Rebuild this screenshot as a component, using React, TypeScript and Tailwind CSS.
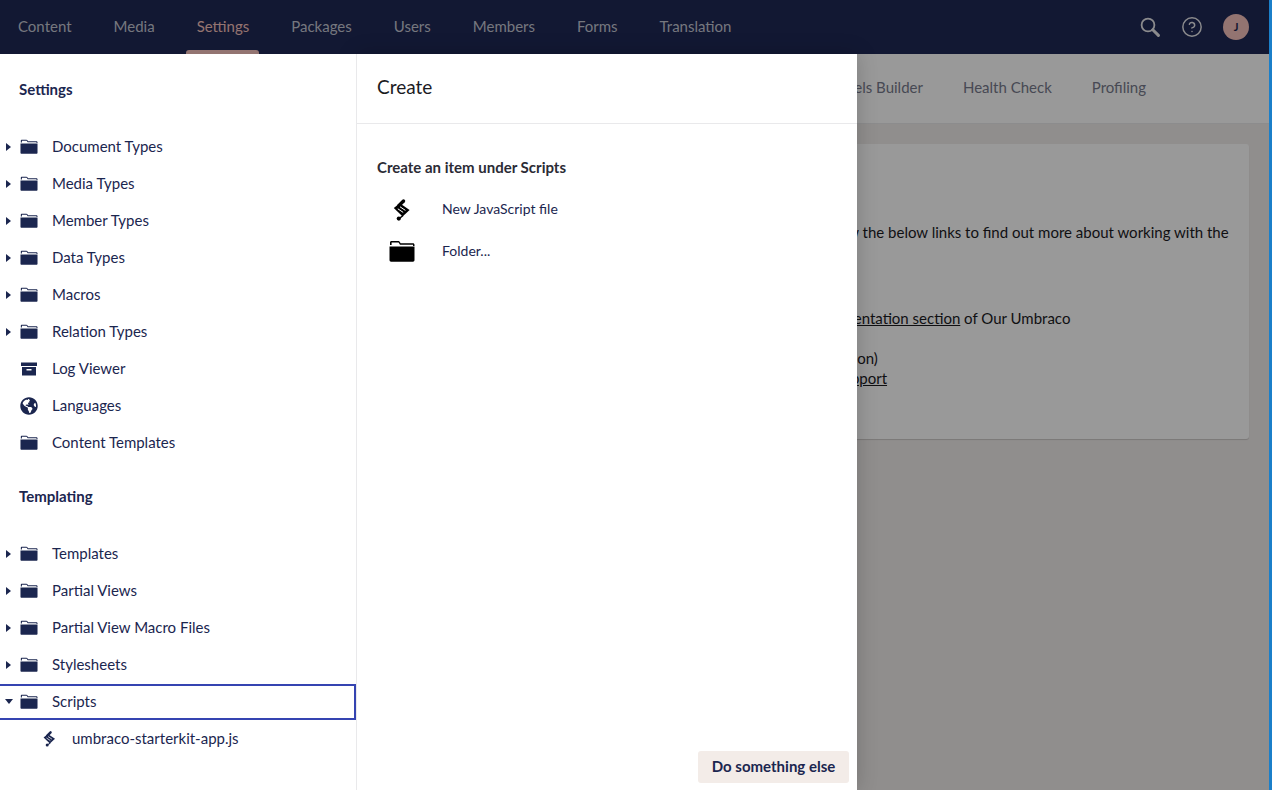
import { CircleHelp } from "lucide-react";
import { FaGlobeAmericas } from "react-icons/fa";

function FolderIcon({ className }: { className?: string }) {
  return (
    <svg viewBox="0 0 26 22" className={className} fill="currentColor">
      <path d="M1 5V2.5C1 1.6 1.6 1 2.5 1H9C10 1 10.6 1.4 11 2.2L11.6 3.2H24C24.8 3.2 25.5 3.9 25.5 4.7V6H24V4.8H11L9.6 2.6H2.6V5Z" />
      <path d="M0.5 6.5H25.5V20C25.5 21 24.8 21.7 24 21.7H2C1.2 21.7 0.5 21 0.5 20Z" />
    </svg>
  );
}

function ArchiveIcon({ className }: { className?: string }) {
  return (
    <svg viewBox="0 0 16 14" className={className} fill="currentColor">
      <rect x="0" y="0.5" width="16" height="3.5" />
      <path d="M1 5H15V13.5H1ZM5.5 7V8.5H10.5V7Z" fillRule="evenodd" />
    </svg>
  );
}

function ScriptIcon({ className }: { className?: string }) {
  return (
    <svg viewBox="0 0 18 23" className={className} fill="currentColor">
      <path d="M10.5 3L6 7.5" stroke="currentColor" strokeWidth="3.4" strokeLinecap="round" />
      <path d="M0.8 10L6.8 5.2L16.6 12L9.6 18.4Z" />
      <path d="M7 8.8L12.4 12.4M4.8 10.8L10.2 14.4" stroke="#fff" strokeWidth="1" />
      <path d="M10 17.5L7 20" stroke="currentColor" strokeWidth="1.6" />
      <circle cx="5.8" cy="20.6" r="2.1" />
    </svg>
  );
}

function SearchIcon({ className }: { className?: string }) {
  return (
    <svg viewBox="0 0 20 20" className={className} fill="none" stroke="currentColor">
      <circle cx="8" cy="8" r="6.4" strokeWidth="1.8" />
      <path d="M12.8 12.8L18.4 18.4" strokeWidth="3" strokeLinecap="round" />
    </svg>
  );
}

function TreeRow({
  label,
  icon = "folder",
  caret = true,
}: {
  label: string;
  icon?: "folder" | "archive" | "globe";
  caret?: boolean;
}) {
  return (
    <li className="flex h-[37px] items-center text-[15px] text-[#1b264f]">
      <span className="flex w-5 pl-[6px]">
        {caret && (
          <span className="h-0 w-0 border-y-[4px] border-l-[5px] border-y-transparent border-l-[#1b264f]" />
        )}
      </span>
      <span className="flex w-[18px] justify-center">
        {icon === "folder" && <FolderIcon className="h-[15px] w-[18px]" />}
        {icon === "archive" && <ArchiveIcon className="h-[14px] w-[16px]" />}
        {icon === "globe" && <FaGlobeAmericas className="h-[18px] w-[18px]" />}
      </span>
      <span className="ml-[14px]">{label}</span>
    </li>
  );
}

const navItems = ["Content", "Media", "Settings", "Packages", "Users", "Members", "Forms", "Translation"];
const tabs = ["Welcome", "Examine Management", "Published Status", "Models Builder", "Health Check", "Profiling"];

export default function App() {
  return (
    <div className="relative flex h-[790px] w-[1272px] overflow-hidden bg-white font-['Lato',sans-serif]">
      <div className="flex min-w-0 flex-1 flex-col bg-[#f1edec]">
        {/* ===== TOP BAR ===== */}
        <header className="flex h-[54px] shrink-0 items-center justify-between bg-[#1f2855] pl-[18px] pr-5">
          <nav className="flex h-full items-center gap-[42px]">
            {navItems.map((item) =>
              item === "Settings" ? (
                <a key={item} className="relative flex h-full items-center pb-[2px] text-[15px] text-[#f5c1bc]">
                  {item}
                  <span className="absolute -left-[11px] -right-[10px] bottom-0 h-1 rounded-t-[3px] bg-[#f5c1bc]" />
                </a>
              ) : (
                <a key={item} className="pb-[2px] text-[15px] text-[#c4c6d3]">
                  {item}
                </a>
              ),
            )}
          </nav>
          <div className="flex items-center gap-5 text-[#e8e8ec]">
            <SearchIcon className="mr-[1px] h-5 w-5" />
            <CircleHelp className="h-[22px] w-[22px]" strokeWidth={1.6} />
            <span className="flex h-[26px] w-[26px] items-center justify-center rounded-full bg-[#f5c1bc] text-[11px] font-bold text-[#1b264f]">
              J
            </span>
          </div>
        </header>

        {/* ===== DASHBOARD BEHIND THE DRAWER ===== */}
        <main className="ml-[357px] flex min-h-0 flex-1 flex-col">
          <div className="flex h-[70px] shrink-0 items-center gap-10 border-b border-[#e9e9eb] bg-white pb-[2px] pl-[30px] text-[15px] text-[#777a8c]">
            {tabs.map((tab) => (
              <span key={tab} className="whitespace-nowrap">
                {tab}
              </span>
            ))}
          </div>
          <div className="p-5">
            <section className="h-[295px] rounded-[3px] bg-white px-5 pt-[30px] text-[15px] leading-5 text-[#1b1b1f] shadow-[0_1px_1px_rgba(0,0,0,0.16)]">
              <h3 className="text-xl font-bold">Start here</h3>
              <p className="mt-[20px]">
                This section contains the building blocks for your Umbraco site. Follow the below links to find out more
                about working with the items in the Settings section
              </p>
              <h4 className="mt-5 font-bold">Find out more:</h4>
              <ul className="mt-[6px] list-disc pl-[25px]">
                <li>
                  Read more about working with the items in Settings <a className="underline">in the Documentation section</a> of Our Umbraco
                </li>
                <li>
                  Ask a question in the <a className="underline">Community Forum</a>
                </li>
                <li>
                  Watch our <a className="underline">tutorial videos</a> (some are free, some require a subscription)
                </li>
                <li>
                  Find out about our <a className="underline">productivity boosting tools and commercial support</a>
                </li>
                <li>
                  Find out about real-life <a className="underline">training and certification</a> opportunities
                </li>
              </ul>
            </section>
          </div>
        </main>
      </div>

      {/* Browser edge */}
      <div className="relative z-30 w-[3px] shrink-0 bg-[#1b7fc9]" />

      {/* ===== DIM OVERLAY ===== */}
      <div className="absolute inset-0 z-10 bg-black/40" />

      {/* ===== TREE ===== */}
      <aside className="absolute bottom-0 left-0 top-[54px] z-30 w-[357px] border-r border-[#e9e9eb] bg-white">
        <h2 className="pl-[19px] pt-[26px] text-[15px] font-bold leading-[19px] text-[#1b264f]">Settings</h2>
        <ul className="mt-[29px] pl-0">
          <TreeRow label="Document Types" />
          <TreeRow label="Media Types" />
          <TreeRow label="Member Types" />
          <TreeRow label="Data Types" />
          <TreeRow label="Macros" />
          <TreeRow label="Relation Types" />
          <TreeRow label="Log Viewer" icon="archive" caret={false} />
          <TreeRow label="Languages" icon="globe" caret={false} />
          <TreeRow label="Content Templates" caret={false} />
        </ul>
        <h2 className="pl-[19px] pt-[26px] text-[15px] font-bold leading-[19px] text-[#1b264f]">Templating</h2>
        <ul className="mt-[29px]">
          <TreeRow label="Templates" />
          <TreeRow label="Partial Views" />
          <TreeRow label="Partial View Macro Files" />
          <TreeRow label="Stylesheets" />
          <li className="mt-[1px] flex h-[36px] items-center border-2 border-l-0 border-[#3544b1] pb-[1px] text-[15px] text-[#1b264f]">
            <span className="flex w-5 pl-[5px]">
              <span className="h-0 w-0 border-x-[4px] border-t-[5px] border-x-transparent border-t-[#1b264f]" />
            </span>
            <span className="flex w-[18px] justify-center">
              <FolderIcon className="h-[15px] w-[18px]" />
            </span>
            <span className="ml-[14px]">Scripts</span>
          </li>
          <li className="flex h-[37px] items-center pl-[43px] text-[15px] text-[#1b264f]">
            <ScriptIcon className="h-[17px] w-[13px]" />
            <span className="ml-[16px]">umbraco-starterkit-app.js</span>
          </li>
        </ul>
      </aside>

      {/* ===== CREATE DRAWER ===== */}
      <section className="absolute bottom-0 left-[357px] top-[54px] z-20 flex w-[500px] flex-col bg-white shadow-[0_0_20px_rgba(0,0,0,0.19)]">
        <div className="flex h-[70px] shrink-0 items-center border-b border-[#e9e9eb] pb-[2px] pl-5 text-[19px] text-[#1b1b1f]">
          Create
        </div>
        <div className="flex-1 pl-5 pt-[33px]">
          <h3 className="text-[15px] font-bold leading-5 text-[#2b2b35]">Create an item under Scripts</h3>
          <ul className="mt-[11px] text-sm text-[#1b264f]">
            <li className="flex h-[42px] items-center">
              <span className="flex w-[50px] justify-center">
                <ScriptIcon className="h-[23px] w-[18px] text-black" />
              </span>
              <span className="ml-[15px]">New JavaScript file</span>
            </li>
            <li className="flex h-[42px] items-center">
              <span className="flex w-[50px] justify-center">
                <FolderIcon className="h-[22px] w-[26px] text-black" />
              </span>
              <span className="ml-[15px]">Folder...</span>
            </li>
          </ul>
        </div>
        <div className="flex justify-end pb-[7px] pr-2">
          <button className="h-8 w-[151px] rounded-[3px] bg-[#f3ece8] pb-[2px] text-[15px] font-bold text-[#1b264f]">
            Do something else
          </button>
        </div>
      </section>
    </div>
  );
}
